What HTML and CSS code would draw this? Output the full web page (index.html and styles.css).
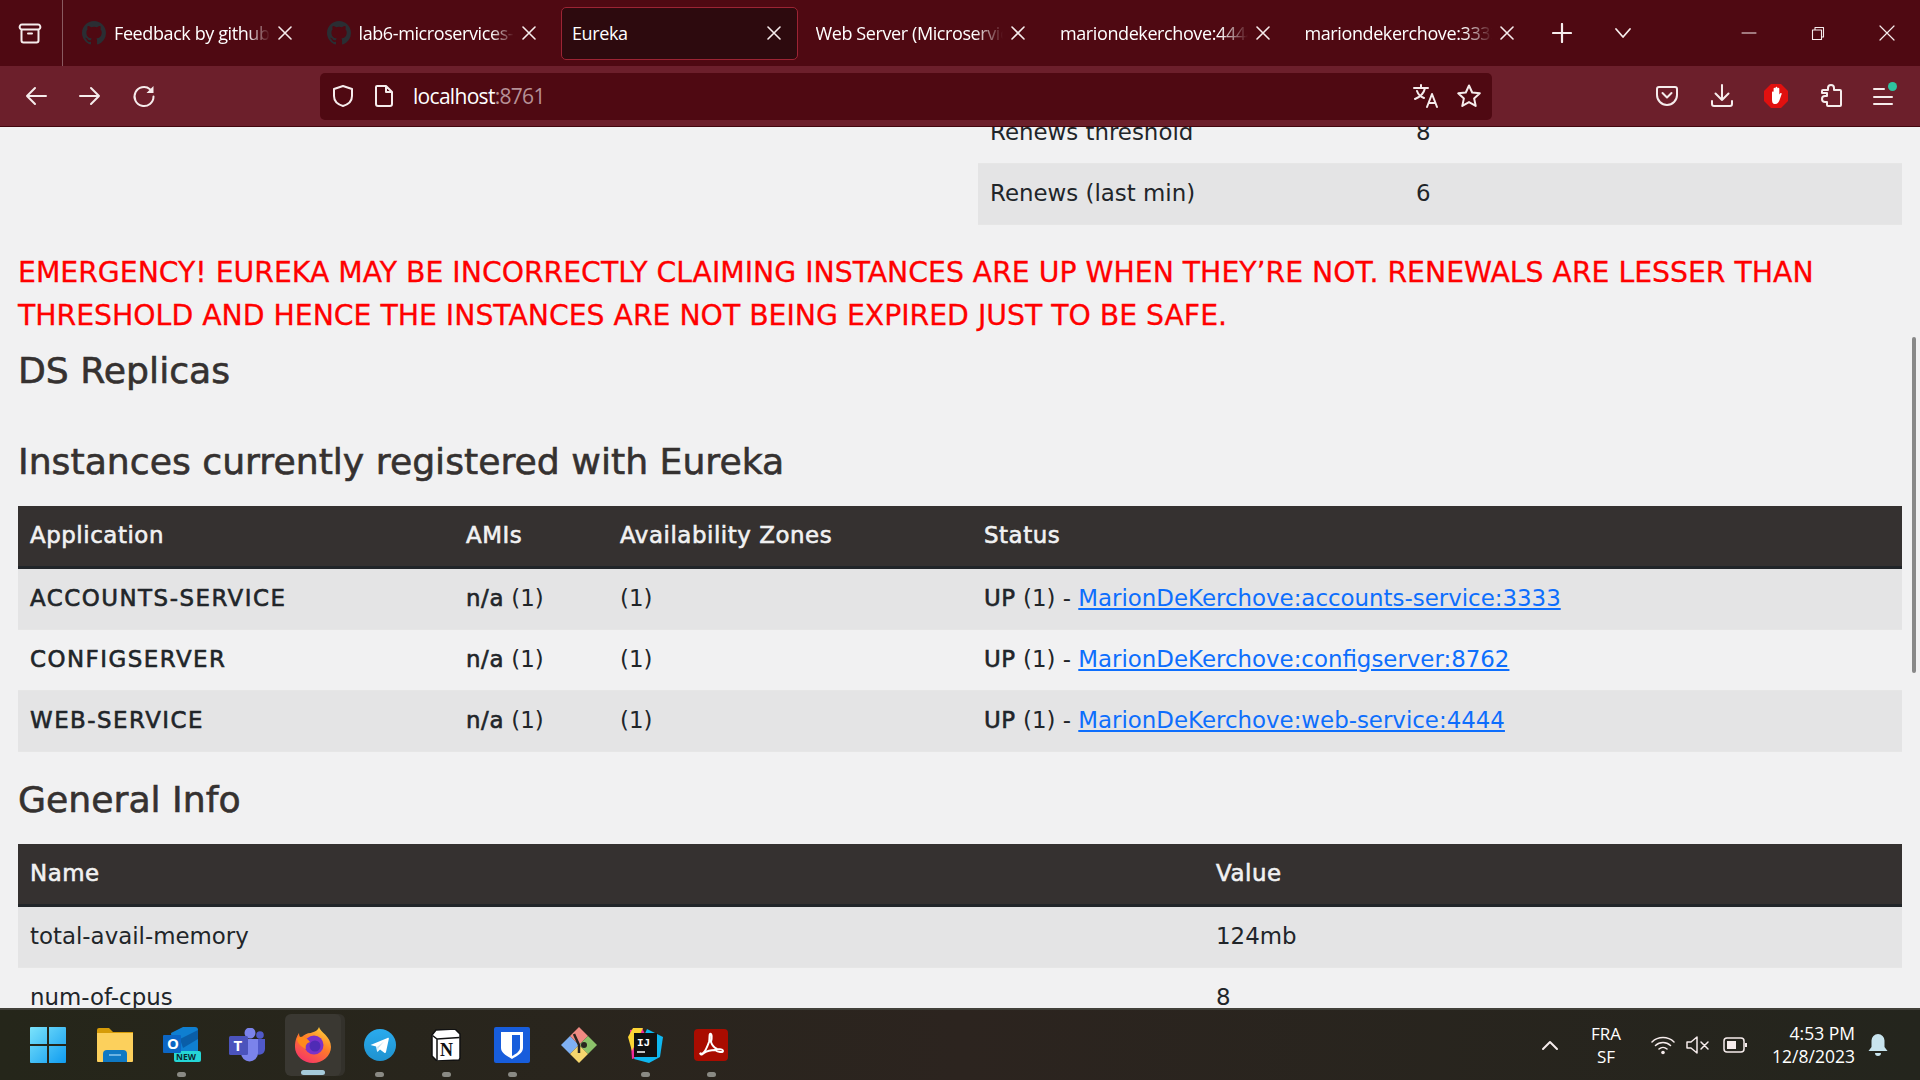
FILE: index.html
```html
<!DOCTYPE html>
<html lang="en">
<head>
<meta charset="utf-8">
<title>Eureka</title>
<link rel="stylesheet" href="styles.css">
</head>
<body>
<div class="screen">
  <header class="tabbar">
    <div class="tab-view">
      <svg width="24" height="24" viewBox="0 0 24 24" class="ico"><path d="M5 3.500h14M3.500 8.500h17v11a2 2 0 0 1-2 2h-13a2 2 0 0 1-2-2zM3.500 8.500a2 2 0 0 1 1.500-5M20.500 8.500a2 2 0 0 0-1.500-5M10 12.500h4" stroke-width="2"/></svg>
    </div>
    <div class="tabs">
      <div class="tab"><svg class="gh" width="24" height="24" viewBox="0 0 16 16"><path d="M8 0C3.580 0 0 3.580 0 8c0 3.540 2.290 6.530 5.470 7.590.4.070.55-.17.55-.38v-1.340c-2.230.49-2.690-1.070-2.690-1.070-.36-.92-.89-1.170-.89-1.170-.73-.5.060-.49.060-.49.8.060 1.230.83 1.230.83.71 1.220 1.870.87 2.330.66.070-.52.280-.87.510-1.070-1.780-.2-3.640-.89-3.640-3.950 0-.87.310-1.590.82-2.150-.08-.2-.36-1.020.080-2.120 0 0 .67-.21 2.200.82a7.600 7.600 0 0 1 4 0c1.530-1.040 2.200-.82 2.200-.82.44 1.100.16 1.920.080 2.120.51.560.82 1.270.82 2.150 0 3.070-1.870 3.750-3.650 3.950.29.250.54.730.54 1.480v2.190c0 .21.150.46.55.38A8 8 0 0 0 16 8c0-4.420-3.580-8-8-8z"/></svg><span class="tab-title">Feedback by github-</span><svg class="ico tab-x" width="14" height="14" viewBox="0 0 14 14"><path d="M1 1l12 12M13 1L1 13" stroke-width="1.600"/></svg></div>
      <div class="tab"><svg class="gh" width="24" height="24" viewBox="0 0 16 16"><path d="M8 0C3.580 0 0 3.580 0 8c0 3.540 2.290 6.530 5.470 7.590.4.070.55-.17.55-.38v-1.340c-2.230.49-2.690-1.070-2.690-1.070-.36-.92-.89-1.170-.89-1.170-.73-.5.060-.49.060-.49.8.060 1.230.83 1.230.83.71 1.220 1.870.87 2.330.66.070-.52.280-.87.510-1.070-1.780-.2-3.640-.89-3.640-3.950 0-.87.310-1.590.82-2.150-.08-.2-.36-1.020.080-2.120 0 0 .67-.21 2.200.82a7.600 7.600 0 0 1 4 0c1.530-1.040 2.200-.82 2.200-.82.44 1.100.16 1.920.080 2.120.51.560.82 1.270.82 2.150 0 3.070-1.870 3.750-3.650 3.950.29.250.54.730.54 1.480v2.190c0 .21.150.46.55.38A8 8 0 0 0 16 8c0-4.420-3.580-8-8-8z"/></svg><span class="tab-title">lab6-microservices-org</span><svg class="ico tab-x" width="14" height="14" viewBox="0 0 14 14"><path d="M1 1l12 12M13 1L1 13" stroke-width="1.600"/></svg></div>
      <div class="tab tab-active"><span class="tab-title">Eureka</span><svg class="ico tab-x" width="14" height="14" viewBox="0 0 14 14"><path d="M1 1l12 12M13 1L1 13" stroke-width="1.600"/></svg></div>
      <div class="tab"><span class="tab-title">Web Server (Microservices)</span><svg class="ico tab-x" width="14" height="14" viewBox="0 0 14 14"><path d="M1 1l12 12M13 1L1 13" stroke-width="1.600"/></svg></div>
      <div class="tab"><span class="tab-title">mariondekerchove:4444/</span><svg class="ico tab-x" width="14" height="14" viewBox="0 0 14 14"><path d="M1 1l12 12M13 1L1 13" stroke-width="1.600"/></svg></div>
      <div class="tab"><span class="tab-title">mariondekerchove:3333/</span><svg class="ico tab-x" width="14" height="14" viewBox="0 0 14 14"><path d="M1 1l12 12M13 1L1 13" stroke-width="1.600"/></svg></div>
    </div>
    <svg class="ico plus" width="20" height="20" viewBox="0 0 20 20"><path d="M10 1v18M1 10h18" stroke-width="2.200"/></svg>
    <svg class="ico chev" width="20" height="20" viewBox="0 0 20 20"><path d="M3 6l7 8 7-8" stroke-width="1.800"/></svg>
    <div class="winctl">
      <svg class="ico" width="16" height="16" viewBox="0 0 16 16"><path d="M1 8h14" stroke-width="1"/></svg>
      <svg class="ico" width="16" height="16" viewBox="0 0 16 16"><path d="M2.500 5h9v9.500h-9zM5 5V2.500h8.500V12H11.500" stroke-width="1.100"/></svg>
      <svg class="ico" width="16" height="16" viewBox="0 0 16 16"><path d="M1 1l14 14M15 1L1 15" stroke-width="1.200"/></svg>
    </div>
  </header>
  <nav class="navbar">
    <div class="nav-btns">
      <svg class="ico" width="24" height="24" viewBox="0 0 24 24"><path d="M22 12H3M11 4l-8 8 8 8" stroke-width="2"/></svg>
      <svg class="ico" width="24" height="24" viewBox="0 0 24 24"><path d="M2 12h19M13 4l8 8-8 8" stroke-width="2"/></svg>
      <svg class="ico" width="24" height="24" viewBox="0 0 24 24"><path d="M18 5.200A9.500 9.500 0 1 0 21.500 12.500" stroke-width="2"/><path d="M21.500 2v7h-7z" class="solid"/></svg>
    </div>
    <div class="urlbar">
      <svg class="ico" width="24" height="24" viewBox="0 0 24 24"><path d="M12 2l9 3v7c0 5-4 8.500-9 10-5-1.500-9-5-9-10V5z" stroke-width="2"/></svg>
      <svg class="ico" width="22" height="24" viewBox="0 0 22 24"><path d="M4 2h9l6 6v12a2 2 0 0 1-2 2H5a2 2 0 0 1-2-2V3a1 1 0 0 1 1-1zM13 2v6h6" stroke-width="2"/></svg>
      <span class="url"><span class="url-host">localhost</span>:8761</span>
      <svg class="ico" width="26" height="26" viewBox="0 0 26 26"><path d="M2 5h14M9 2v3M13 5c-1 5-5 9-10 11M5 8c1 3 4 6 7 7M15 24l5-13 5 13M17 20h6" stroke-width="2"/></svg>
      <svg class="ico" width="26" height="26" viewBox="0 0 26 26"><path d="M13 2.500l3.200 7 7.600.8-5.700 5.100 1.600 7.500-6.700-3.800-6.700 3.800 1.600-7.500L2.200 10.300l7.600-.8z" stroke-width="2"/></svg>
    </div>
    <div class="nav-tools">
      <svg class="ico" width="24" height="24" viewBox="0 0 24 24"><path d="M4 3h16a2 2 0 0 1 2 2v6a10 10 0 0 1-20 0V5a2 2 0 0 1 2-2zM7.500 9l4.500 4.500L16.500 9" stroke-width="2"/></svg>
      <svg class="ico" width="24" height="24" viewBox="0 0 24 24"><path d="M12 1v15M5.500 9.500L12 16l6.500-6.500M2 17v3a2 2 0 0 0 2 2h16a2 2 0 0 0 2-2v-3" stroke-width="2"/></svg>
      <svg width="24" height="24" viewBox="0 0 24 24"><path d="M7 0h10l7 7v10l-7 7H7l-7-7V7z" fill="#e0100f"/><path d="M8 15V8.500a1 1 0 0 1 1.600-.8V4.500a1 1 0 0 1 1.900 0V3.500a1 1 0 0 1 1.900 0v1a1 1 0 0 1 1.900 0v6l1-1.200c.8-.8 1.800 0 1.300 1l-2 5.700c-.8 2.200-2 4-4.300 4-2.800 0-3.300-2-3.300-5z" fill="#fff"/></svg>
      <svg class="ico" width="24" height="24" viewBox="0 0 24 24"><path d="M9 6V4a3 3 0 0 1 6 0v2h6a1 1 0 0 1 1 1v14a1 1 0 0 1-1 1H9a1 1 0 0 1-1-1v-3H6a3 3 0 0 1 0-6h2V9H3V7a1 1 0 0 1 1-1z" stroke-width="2"/></svg>
      <div class="menu-btn"><span class="bar bar-short"></span><span class="bar"></span><span class="bar"></span><span class="badge-dot"></span></div>
    </div>
  </nav>
  <main class="viewport">
    <div class="stats-wrap">
      <table class="stats">
        <tbody>
          <tr><td class="s1">Renews threshold</td><td>8</td></tr>
          <tr class="alt"><td>Renews (last min)</td><td>6</td></tr>
        </tbody>
      </table>
    </div>
    <h4 class="emergency">EMERGENCY! EUREKA MAY BE INCORRECTLY CLAIMING INSTANCES ARE UP WHEN THEY’RE NOT. RENEWALS ARE LESSER THAN THRESHOLD AND HENCE THE INSTANCES ARE NOT BEING EXPIRED JUST TO BE SAFE.</h4>
    <h1 class="h-ds">DS Replicas</h1>
    <h2 class="h-sec h-inst">Instances currently registered with Eureka</h2>
    <table class="grid">
      <thead><tr><th class="c1">Application</th><th class="c2">AMIs</th><th class="c3">Availability Zones</th><th>Status</th></tr></thead>
      <tbody>
        <tr class="alt"><td><b class="label">ACCOUNTS-SERVICE</b></td><td><b>n/a</b> (1)</td><td>(1)</td><td><b>UP</b> (1) - <a href="#">MarionDeKerchove:accounts-service:3333</a></td></tr>
        <tr><td><b class="label">CONFIGSERVER</b></td><td><b>n/a</b> (1)</td><td>(1)</td><td><b>UP</b> (1) - <a href="#">MarionDeKerchove:configserver:8762</a></td></tr>
        <tr class="alt"><td><b class="label">WEB-SERVICE</b></td><td><b>n/a</b> (1)</td><td>(1)</td><td><b>UP</b> (1) - <a href="#">MarionDeKerchove:web-service:4444</a></td></tr>
      </tbody>
    </table>
    <h2 class="h-sec h-gen">General Info</h2>
    <table class="grid">
      <thead><tr><th class="g1">Name</th><th>Value</th></tr></thead>
      <tbody>
        <tr class="alt"><td>total-avail-memory</td><td>124mb</td></tr>
        <tr><td>num-of-cpus</td><td>8</td></tr>
      </tbody>
    </table>
    <div class="scrollthumb"></div>
  </main>
  <footer class="taskbar">
    <div class="apps">
      <div class="app"><svg width="36" height="36" viewBox="0 0 36 36"><defs><linearGradient id="win" x1="0" y1="0" x2="1" y2="1"><stop offset="0" stop-color="#7be3fb"/><stop offset="1" stop-color="#0f9cf0"/></linearGradient></defs><path d="M0 1a1 1 0 0 1 1-1h16v17H0zM19 0h16a1 1 0 0 1 1 1v16H19zM0 19h17v17H1a1 1 0 0 1-1-1zM19 19h17v16a1 1 0 0 1-1 1H19z" fill="url(#win)"/></svg></div>
      <div class="app"><svg class="nudge" width="36" height="34" viewBox="0 0 36 34"><path d="M0 2a2 2 0 0 1 2-2h10l4 4h20v8H0z" fill="#d69b08"/><path d="M0 5h36v28a1 1 0 0 1-1 1H1a1 1 0 0 1-1-1z" fill="#fcd05c"/><path d="M6 34V26a4 4 0 0 1 4-4h16a4 4 0 0 1 4 4v8z" fill="#0f79c4"/><path d="M12 27h12" stroke="#8ac6ee" stroke-width="1.500"/></svg></div>
      <div class="app app-dot"><svg class="nudge" width="38" height="36" viewBox="0 0 38 36"><path d="M8 6l12-6h12a3 3 0 0 1 3 3v22H10z" fill="#0f7fd1"/><path d="M17 12L35 3v9L20 21z" fill="#0a5ea8"/><rect x="11" y="24" width="27" height="11" rx="2" fill="#25d6d6"/><text x="13" y="33" class="new-txt">NEW</text><rect y="8" width="18" height="18" rx="1" fill="#0c66c4"/><text x="4" y="22" class="o-txt">O</text></svg></div>
      <div class="app"><svg width="36" height="34" viewBox="0 0 36 34"><circle cx="21" cy="5" r="5.500" fill="#7b83eb"/><circle cx="31" cy="7" r="3.800" fill="#5059c9"/><path d="M27 11h9v10a6 6 0 0 1-9 5z" fill="#5059c9"/><path d="M12 11h17v14a8.500 8.500 0 0 1-17 0z" fill="#7b83eb"/><rect y="8" width="19" height="19" rx="1.500" fill="#4b53bc"/><text x="4.500" y="23" class="t-txt">T</text></svg></div>
      <div class="app app-active"><svg class="ff" width="36" height="36" viewBox="0 0 36 36"><defs><linearGradient id="ff" x1="0.800" y1="0" x2="0.200" y2="1"><stop offset="0" stop-color="#ffd23a"/><stop offset="0.450" stop-color="#ff7a2a"/><stop offset="1" stop-color="#f5306d"/></linearGradient></defs><path d="M24 0c1 5 12 9 12 20a18 16 0 0 1-36 0C0 13 2 9 4 6c0 3 1 4 2 5 2-3 6-5 10-5 2-1 7-2 8-6z" fill="url(#ff)"/><circle cx="19" cy="18" r="9.500" fill="#7a32c9"/><circle cx="20" cy="19" r="5.500" fill="#4f2bb5"/><path d="M2 11c6-3 10 0 13 4-3 1-5 3-4 7-4-2-9-5-9-11z" fill="#ff8a1c"/></svg></div>
      <div class="app app-dot"><svg width="32" height="32" viewBox="0 0 32 32"><defs><linearGradient id="tg" x1="0.500" y1="0" x2="0.500" y2="1"><stop offset="0" stop-color="#2aabee"/><stop offset="1" stop-color="#1f92cf"/></linearGradient></defs><circle cx="16" cy="16" r="16" fill="url(#tg)"/><path d="M6.500 16l17-7c1-.4 1.500.2 1.300 1l-2.800 13c-.2 1-.9 1.200-1.700.7l-4.300-3.200-2.100 2c-.4.400-.8.300-.9-.2l-.9-4.800z" fill="#fff"/><path d="M13 18l7-5.500-5.500 6.500-.5 4z" fill="#c8e3f2"/></svg></div>
      <div class="app app-dot"><svg width="30" height="32" viewBox="0 0 30 32"><path d="M1 6l4-5 19-1 5 5v24l-1 2-22 1-5-5z" fill="#fff"/><path d="M1.500 6.500l4.500 3.500 22.500-1.500M6 10v21.500" stroke="#111" stroke-width="1.500" fill="none"/><path d="M1 6l4-5 19-1 5 5v24l-1 2-22 1-5-5z" fill="none" stroke="#111" stroke-width="1.500"/><text x="9" y="27" class="n-txt">N</text></svg></div>
      <div class="app app-dot"><svg width="36" height="36" viewBox="0 0 36 36"><rect width="36" height="36" rx="2" fill="#175ddc"/><path d="M7 5h22v16c0 5-6 8-11 11-5-3-11-6-11-11z" fill="#fff"/><path d="M18 8h8v13c0 3-4 6-8 8z" fill="#175ddc"/></svg></div>
      <div class="app"><svg width="36" height="36" viewBox="0 0 36 36"><path d="M9 18l9-9 9 9-9 9z" fill="#2a2520"/><path d="M0 18l9-9 9 9-9 9z" fill="#7fb0f2"/><path d="M9 9l9-9 9 9-9 9z" fill="#f08a82"/><path d="M18 18l9-9 9 9-9 9z" fill="#8cc26a"/><path d="M9 27l9-9 9 9-9 9z" fill="#f5d66e"/><path d="M13 7l5 11v8" stroke="#2a2520" stroke-width="2.500" fill="none"/><circle cx="23" cy="18" r="3" fill="#2a2520"/></svg></div>
      <div class="app app-dot"><svg width="36" height="36" viewBox="0 0 36 36"><path d="M3 3l12-2 3 6-3 22-10 3z" fill="#f0299a"/><path d="M1 10l5-9h10L5 24z" fill="#fcd535"/><path d="M20 2l16 8-3 20-11 6-15-4z" fill="#0fb7f0"/><rect x="7" y="6" width="23" height="24" fill="#111"/><text x="10" y="19" class="ij-txt">IJ</text><path d="M10 25h8" stroke="#fff" stroke-width="1.500"/></svg></div>
      <div class="app app-dot"><svg width="34" height="32" viewBox="0 0 34 32"><rect width="34" height="32" rx="4" fill="#a90c00"/><path d="M6 24c3 3 6-3 9-11 1-4 0-7 1-8 2-1 2 4 1 8 1 3 4 6 6 7 3 0 6 0 6 2s-5 1-8-1c-4 0-8 1-11 3-2 1-3 3-4 0z" fill="none" stroke="#fff" stroke-width="2"/></svg></div>
    </div>
    <div class="tray">
      <svg class="ico" width="18" height="12" viewBox="0 0 18 12"><path d="M2 10l7-7 7 7" stroke-width="2"/></svg>
      <div class="lang">FRA<br>SF</div>
      <svg class="ico" width="24" height="20" viewBox="0 0 24 20"><path d="M1 7a16 16 0 0 1 22 0M4.500 10.500a11 11 0 0 1 15 0M8 14a6 6 0 0 1 8 0" stroke-width="1.500"/><circle cx="12" cy="17.500" r="1.800" class="solid"/></svg>
      <svg class="ico" width="24" height="20" viewBox="0 0 24 20"><path d="M1 7h4l6-5v16l-6-5H1zM15 7l7 7M22 7l-7 7" stroke-width="1.500"/></svg>
      <svg class="ico batt" width="24" height="18" viewBox="0 0 24 18"><rect x="1" y="2" width="20" height="14" rx="3" stroke-width="1.500"/><rect x="4" y="5" width="9" height="8" class="solid"/><rect x="22" y="7" width="2" height="4" class="solid"/></svg>
      <div class="clock"><div>4:53 PM</div><div>12/8/2023</div></div>
      <svg width="20" height="24" viewBox="0 0 20 24"><path d="M10 1a6.500 6.500 0 0 1 6.500 6.500V14l3 4H.5l3-4V7.500A6.500 6.500 0 0 1 10 1zM7 20h6a3 3 0 0 1-6 0z" fill="#c8e4ee"/></svg>
    </div>
  </footer>
</div>
</body>
</html>
```

FILE: styles.css
```css
* { box-sizing: border-box; }
html, body { margin: 0; padding: 0; height: 100%; overflow: hidden; }
body { font-family: "DejaVu Sans", sans-serif; background: #f1f1f2; }
.screen { display: flex; flex-direction: column; width: 1920px; height: 1080px; }
.ico { fill: none; stroke: #f6ecec; stroke-linecap: round; stroke-linejoin: round; flex: none; }
.ico .solid { fill: #f6ecec; stroke: none; }

.tabbar { height: 66px; background: #4f0912; display: flex; align-items: center; color: #fff; flex: none; }
.tab-view { width: 63px; height: 66px; border-right: 1px solid #8a5a60; display: flex; align-items: center; padding-left: 18px; }
.tabs { display: flex; align-items: center; padding-left: 7px; width: 1473px; }
.tab { width: 244.500px; height: 53px; flex: none; padding: 0 23px 0 12px; display: flex; align-items: center; font: 18px "Open Sans", "Liberation Sans", sans-serif; letter-spacing: -0.4px; }
.gh { fill: #2a2e33; flex: none; margin-right: 8px; }
.tab-title { flex: 1; min-width: 0; overflow: hidden; white-space: nowrap; -webkit-mask-image: linear-gradient(to right, #000 85%, transparent 100%); mask-image: linear-gradient(to right, #000 85%, transparent 100%); }
.tab-x { margin-left: 8px; }
.tab-active { background: #2d0a0e; border: 1px solid #9c2434; border-radius: 5px; margin: 0 6px 0 2px; width: 236.500px; padding: 0 16px 0 10px; }
.tab-active .tab-title { -webkit-mask-image: none; mask-image: none; }
.plus { margin-left: 16px; }
.chev { margin-left: 41px; }
.winctl { display: flex; align-items: center; gap: 53px; margin-left: 108px; }

.navbar { height: 61px; background: #6c1f2b; border-bottom: 1px solid #43060e; display: flex; align-items: center; flex: none; }
.nav-btns { width: 320px; display: flex; gap: 30px; padding-left: 24px; }
.urlbar { width: 1172px; height: 47px; background: #4f0912; border-radius: 5px; display: flex; align-items: center; gap: 18px; padding: 0 10px 0 11px; }
.url { flex: 1; font: 21px "Open Sans", "Liberation Sans", sans-serif; color: #b69096; letter-spacing: -0.7px; }
.url-host { color: #fff; }
.nav-tools { display: flex; align-items: center; gap: 30.500px; margin-left: 163px; }
.menu-btn { position: relative; width: 20px; height: 20px; display: flex; flex-direction: column; justify-content: space-between; align-items: flex-end; padding: 2px 0 1px; }
.bar { height: 2px; width: 20px; background: #f6ecec; border-radius: 1px; }
.bar-short { width: 12px; align-self: flex-start; }
.badge-dot { position: absolute; right: -4px; top: -4px; width: 9px; height: 9px; border-radius: 50%; background: #2ec4a0; }

.viewport { flex: 1; position: relative; overflow: hidden; padding: 0 18px; color: #212529; background: #f1f1f2; font-size: 22.900px; line-height: 36px; min-height: 0; }
.stats-wrap { margin: -24px 0 0 960px; }
table { border-collapse: collapse; width: 100%; table-layout: fixed; }
td, th { padding: 11px 12px 13px; text-align: left; border-bottom: 1px solid #e6e6e6; }
.alt td { background: #e4e4e5; }
.s1 { width: 426px; }
b { font-weight: 400; letter-spacing: 0.6px; -webkit-text-stroke: 0.6px #212529; }
.label { letter-spacing: 1.500px; }
.emergency { color: #f00; font-size: 28.300px; font-weight: 400; -webkit-text-stroke: 0.3px #f00; line-height: 43px; margin: 26px 0 0; }
.h-ds, .h-sec { color: #353130; font-weight: 400; -webkit-text-stroke: 0.6px #353130; margin: 0; font-size: 36.200px; line-height: 44px; }
.h-ds { margin-top: 12px; }
.h-inst { margin: 47px 0 22px; }
.h-gen { margin: 26px 0 22px; }
.grid thead th { background: #353130; color: #f1f1f2; font-weight: 400; letter-spacing: 0.55px; -webkit-text-stroke: 0.6px #f1f1f2; border-bottom: 3px solid #212529; }
.c1 { width: 436px; }
.c2 { width: 154px; }
.c3 { width: 364px; }
.g1 { width: 1186px; }
a { color: #0d6efd; }
.scrollthumb { position: absolute; right: 4px; top: 210px; width: 4px; height: 336px; background: #888; border-radius: 2px; }

.taskbar { height: 72px; flex: none; background: linear-gradient(90deg, #25261a, #2c241f 50%, #24251d); border-top: 2px solid #42413a; display: flex; align-items: center; justify-content: space-between; color: #fff; padding: 0 32px 0 15px; }
.apps { display: flex; }
.app { width: 66.300px; height: 62px; display: flex; align-items: center; justify-content: center; position: relative; }
.nudge { margin-left: 2px; }
.app-dot::after { content: ""; position: absolute; bottom: -1px; left: 29px; width: 9px; height: 5px; border-radius: 3px; background: #8a8a84; }
.app-active::before { content: ""; position: absolute; inset: 0 5px; background: #3a3832; border-radius: 6px; box-shadow: 4px 0 0 #33312b; }
.app-active::after { content: ""; position: absolute; bottom: 1px; left: 21px; width: 24px; height: 5px; border-radius: 3px; background: #a6cbdb; }
.ff { position: relative; }
.new-txt { font: bold 8.500px "Open Sans", sans-serif; fill: #0b2a33; }
.o-txt { font: bold 15px "Open Sans", sans-serif; fill: #fff; }
.t-txt { font: bold 15px "Open Sans", sans-serif; fill: #fff; }
.n-txt { font: bold 18px "Liberation Serif", serif; fill: #111; }
.ij-txt { font: bold 11px "Liberation Mono", monospace; fill: #fff; }
.tray { display: flex; align-items: center; gap: 11px; }
.batt { margin-left: 2px; }
.lang { font: 17px/23px "Open Sans", sans-serif; text-align: center; width: 40px; margin: 0 14px 0 16px; }
.clock { font: 17.500px/23px "Open Sans", sans-serif; text-align: right; width: 87px; margin: 0 2px 0 10px; }
```
